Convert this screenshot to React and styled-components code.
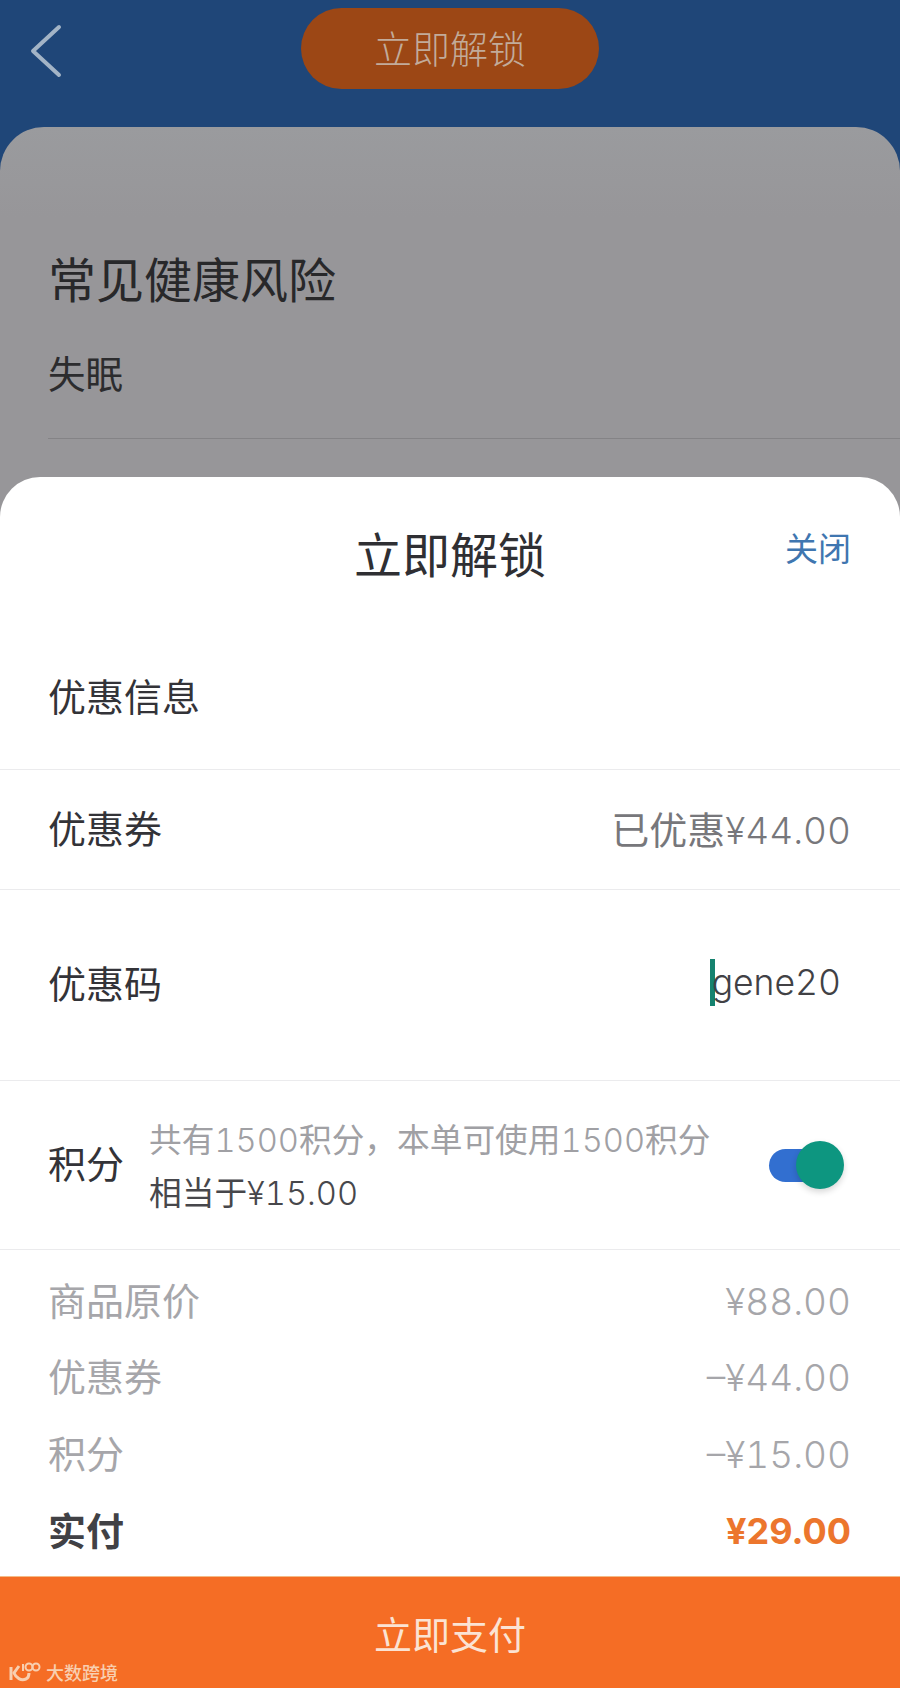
import React from 'react';
import styled, { createGlobalStyle } from 'styled-components';

const GlobalStyle = createGlobalStyle`
  html, body {
    margin: 0;
    padding: 0;
    background: #1f4678;
  }
  * {
    box-sizing: border-box;
  }
`;

const Page = styled.div`
  position: relative;
  width: 900px;
  height: 1688px;
  overflow: hidden;
  background: #1f4678;
  font-family: "Noto Sans CJK SC", "Liberation Sans", sans-serif;
`;

const Header = styled.header`
  height: 127px;
  padding: 8px 0 0 30px;
  display: flex;
  align-items: flex-start;
`;

const BackIcon = styled.svg`
  width: 32px;
  height: 54px;
  margin-top: 16px;
  flex: none;
`;

const UnlockPill = styled.div`
  width: 298px;
  height: 81px;
  margin-left: 239px;
  padding-bottom: 4px;
  border-radius: 41px;
  background: #9c4715;
  color: #c2ab9a;
  font-size: 38px;
  display: flex;
  align-items: center;
  justify-content: center;
  font-weight: 300;
`;

const Backdrop = styled.section`
  height: 420px;
  padding: 122px 0 0 48px;
  border-radius: 44px 44px 0 0;
  background: linear-gradient(#9a9b9e, #979699 90px);
`;

const RiskTitle = styled.h2`
  margin: 0;
  font-size: 48px;
  line-height: 56px;
  font-weight: 400;
  color: #28282a;
`;

const RiskItem = styled.div`
  margin-top: 44px;
  padding-bottom: 43px;
  font-size: 37.5px;
  line-height: 46px;
  color: #2c2c2e;
  border-bottom: 1px solid #848386;
`;

const Sheet = styled.div`
  position: absolute;
  left: 0;
  right: 0;
  top: 477px;
  bottom: 0;
  display: flex;
  flex-direction: column;
  border-radius: 40px 40px 0 0;
  background: #ffffff;
`;

const SheetHeader = styled.div`
  position: relative;
  height: 156px;
  padding-top: 41px;
  text-align: center;
  font-size: 48px;
  line-height: 68px;
  color: #2f2f33;
`;

const CloseLink = styled.span`
  position: absolute;
  right: 49px;
  top: 47px;
  font-size: 33px;
  line-height: 46px;
  color: #3f76b0;
`;

const Row = styled.div`
  height: ${(p) => p.$height}px;
  padding: 0 49px 0 48px;
  display: flex;
  align-items: center;
  justify-content: space-between;
  border-bottom: 1px solid #ebebed;
  font-size: 38px;
  color: #333338;
`;

const Label = styled.span`
  flex: none;
  margin-bottom: ${(p) => p.$lift || 7}px;
`;

const Amount = styled.span`
  font-family: Inter, "Liberation Sans", sans-serif;
  font-weight: 300;
  font-variant-numeric: tabular-nums;
  font-size: ${(p) => p.$size || 37}px;
`;

const RowValue = styled.span`
  margin-bottom: 4px;
  color: #77777b;
`;

const CodeInput = styled.span`
  margin-right: 10px;
  margin-bottom: 5px;
  display: inline-flex;
  align-items: center;
  color: #414145;
`;

const Caret = styled.i`
  width: 5px;
  height: 47px;
  margin-right: -3px;
  background: #15826f;
`;

const PointsText = styled.div`
  flex: 1;
  margin-left: 25px;
`;

const PointsHint = styled.div`
  font-size: 32.7px;
  line-height: 42px;
  color: #a0a0a4;
`;

const PointsValue = styled.div`
  margin-top: 9px;
  font-size: 32.7px;
  line-height: 42px;
  color: #47474b;
`;

const Toggle = styled.div`
  position: relative;
  width: 67px;
  height: 33px;
  margin-right: 15px;
  border-radius: 17px;
  background: #326fd0;
`;

const ToggleKnob = styled.span`
  position: absolute;
  right: -8px;
  top: -8px;
  width: 48px;
  height: 48px;
  border-radius: 50%;
  background: #0d9680;
  box-shadow: 0 3px 6px rgba(0, 0, 0, 0.16);
`;

const Summary = styled.div`
  flex: 1;
  padding: 13px 49px 0 48px;
`;

const SummaryRow = styled.div`
  height: 76.6px;
  display: flex;
  align-items: center;
  justify-content: space-between;
  font-size: 38px;
  font-weight: ${(p) => (p.$strong ? 700 : 400)};
  color: ${(p) => (p.$strong ? '#414145' : '#a6a6aa')};
`;

const SummaryLabel = styled.span`
  margin-bottom: 6px;
`;

const Total = styled.span`
  color: #ec762d;
  font-family: Inter, "Liberation Sans", sans-serif;
  font-weight: 700;
  font-size: 36px;
`;

const PayButton = styled.div`
  position: relative;
  height: 112px;
  flex: none;
  display: flex;
  align-items: center;
  justify-content: center;
  background: #f56d25;
  border-top: 1px solid #f4bb86;
  color: #fbe3d3;
  font-size: 38px;
`;

const Watermark = styled.div`
  position: absolute;
  left: 9px;
  bottom: 4px;
  display: flex;
  align-items: center;
  gap: 5px;
  color: #f8cfb0;
  font-size: 18px;
  line-height: 24px;
  font-weight: 500;
`;

const WatermarkLogo = styled.svg`
  width: 32px;
  height: 22px;
`;

const App = () => {
  return (
    <Page>
      <GlobalStyle />
      <Header>
        <BackIcon viewBox="0 0 32 54" fill="none">
          <path d="M29 3 L3 27 L29 51" stroke="#a3b4c6" strokeWidth="4" strokeLinecap="round" strokeLinejoin="round" />
        </BackIcon>
        <UnlockPill>立即解锁</UnlockPill>
      </Header>
      <Backdrop>
        <RiskTitle>常见健康风险</RiskTitle>
        <RiskItem>失眠</RiskItem>
      </Backdrop>
      <Sheet>
        <SheetHeader>
          立即解锁
          <CloseLink>关闭</CloseLink>
        </SheetHeader>
        <Row $height={137}>
          <Label $lift={13}>优惠信息</Label>
        </Row>
        <Row $height={120}>
          <Label>优惠券</Label>
          <RowValue>已优惠<Amount>¥44.00</Amount></RowValue>
        </Row>
        <Row $height={191}>
          <Label>优惠码</Label>
          <CodeInput>
            <Caret />
            <Amount $size={35.5}>gene20</Amount>
          </CodeInput>
        </Row>
        <Row $height={169}>
          <Label>积分</Label>
          <PointsText>
            <PointsHint>共有<Amount $size={32.7}>1500</Amount>积分，本单可使用<Amount $size={32.7}>1500</Amount>积分</PointsHint>
            <PointsValue>相当于<Amount $size={32.7}>¥15.00</Amount></PointsValue>
          </PointsText>
          <Toggle>
            <ToggleKnob />
          </Toggle>
        </Row>
        <Summary>
          <SummaryRow>
            <SummaryLabel>商品原价</SummaryLabel>
            <Amount>¥88.00</Amount>
          </SummaryRow>
          <SummaryRow>
            <SummaryLabel>优惠券</SummaryLabel>
            <Amount>–¥44.00</Amount>
          </SummaryRow>
          <SummaryRow>
            <SummaryLabel>积分</SummaryLabel>
            <Amount>–¥15.00</Amount>
          </SummaryRow>
          <SummaryRow $strong>
            <SummaryLabel>实付</SummaryLabel>
            <Total>¥29.00</Total>
          </SummaryRow>
        </Summary>
        <PayButton>
          立即支付
          <Watermark>
            <WatermarkLogo viewBox="0 0 32 22" fill="none" stroke="#f8cfb0" strokeWidth="2">
              <path d="M2 6 V19" strokeWidth="3" />
              <path d="M10 5 L5 12 C7 17 12 20 17 18 C19 17 20 15 20 12" strokeWidth="3" />
              <path d="M14 3 V10" />
              <circle cx="20" cy="6" r="3.5" />
              <circle cx="27" cy="6" r="3.5" />
            </WatermarkLogo>
            大数跨境
          </Watermark>
        </PayButton>
      </Sheet>
    </Page>
  );
};

export default App;
